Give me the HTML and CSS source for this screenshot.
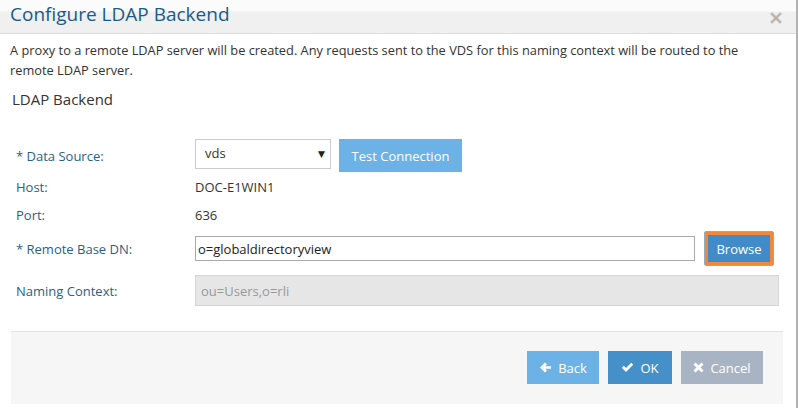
FILE: index.html
```html
<!DOCTYPE html>
<html>
<head>
<meta charset="utf-8">
<link rel="stylesheet" href="styles.css">
</head>
<body>
<div class="dialog">
  <div class="header">
    <div class="title">Configure LDAP Backend</div>
    <span class="close">
      <svg width="12" height="12" viewBox="0 0 12 12">
        <path d="M2 2 L10 10 M10 2 L2 10" stroke="#b8b8b8" stroke-width="2.6" stroke-linecap="square"/>
        <circle cx="6" cy="6.4" r="1.2" fill="#f3a060"/>
      </svg>
    </span>
  </div>
  <div class="body">
    <p class="desc">A proxy to a remote LDAP server will be created. Any requests sent to the VDS for this naming context will be routed to the remote LDAP server.</p>
    <h2 class="section">LDAP Backend</h2>
    <div class="form">
      <div class="row r-ds">
        <label class="lbl">* Data Source:</label>
        <div class="ctl">
          <div class="select"><span>vds</span><span class="caret">▼</span></div>
          <button class="btn btn-light test">Test Connection</button>
        </div>
      </div>
      <div class="row r-host">
        <label class="lbl">Host:</label>
        <div class="ctl val">DOC-E1WIN1</div>
      </div>
      <div class="row r-port">
        <label class="lbl">Port:</label>
        <div class="ctl val">636</div>
      </div>
      <div class="row r-dn">
        <label class="lbl">* Remote Base DN:</label>
        <div class="ctl">
          <div class="input">o=globaldirectoryview</div>
          <button class="browse"><span>Browse</span></button>
        </div>
      </div>
      <div class="row r-nc">
        <label class="lbl">Naming Context:</label>
        <div class="ctl">
          <div class="input disabled">ou=Users,o=rli</div>
        </div>
      </div>
    </div>
  </div>
  <div class="footer">
    <button class="btn btn-light fbtn back">
      <svg width="13" height="13" viewBox="0 0 13 13"><path d="M1 6.5 L6 1.5 L8 3.5 L6.2 5.3 L12 5.3 L12 7.7 L6.2 7.7 L8 9.5 L6 11.5 Z" fill="#fff"/></svg>
      Back
    </button>
    <button class="btn btn-primary fbtn ok">
      <svg width="13" height="13" viewBox="0 0 13 13"><path d="M0.8 6.8 L2.8 4.8 L5 7 L10.2 1.8 L12.2 3.8 L5 11 Z" fill="#fff"/></svg>
      OK
    </button>
    <button class="btn btn-gray fbtn cancel">
      <svg width="11" height="11" viewBox="0 0 11 11"><path d="M1.5 1.5 L9.5 9.5 M9.5 1.5 L1.5 9.5" stroke="#fff" stroke-width="3"/></svg>
      Cancel
    </button>
  </div>
</div>
</body>
</html>
```
FILE: styles.css
```css
* { box-sizing: border-box; }
html, body { margin: 0; padding: 0; background: #fff; }
body { font-family: "Open Sans", "DejaVu Sans", sans-serif; color: #333; }

.dialog {
  width: 798px;
  height: 408px;
  border-right: 2px solid #b2b2b2;
  position: relative;
}

.header {
  height: 34px;
  background: linear-gradient(#fbfbfb 0, #fbfbfb 11px, #f0f0f0 12px, #f0f0f0 100%);
  border-bottom: 1px solid #dcdcdc;
  display: flex;
  align-items: flex-start;
  justify-content: space-between;
  padding: 0 14px 0 10px;
}
.title {
  font-size: 19px;
  line-height: 28px;
  color: #1c5a8a;
}
.close { margin-top: 12px; display: block; line-height: 0; }

.body { padding: 0 10px; }
.desc {
  margin: 6px 0 0 0;
  max-width: 760px;
  font-size: 12.8px;
  line-height: 20px;
  color: #333;
}
.section {
  margin: 9px 0 0 2px;
  font-size: 15px;
  font-weight: normal;
  line-height: 20px;
  color: #333;
}

.form { margin-top: 30px; padding-left: 6px; }
.row { display: flex; align-items: center; }
.lbl { width: 179px; font-size: 13px; color: #2a5f88; flex: none; }
.ctl { display: flex; align-items: center; font-size: 13px; color: #333; }

.r-ds { height: 33px; }
.r-host { height: 30px; }
.r-port { height: 25px; }
.r-dn { height: 37px; margin-top: 3px; }
.r-nc { height: 31px; margin-top: 8px; }

.select {
  width: 136px;
  height: 30px;
  border: 1px solid #ccc;
  display: flex;
  align-items: center;
  justify-content: space-between;
  padding: 0 5px 2px 9px;
  font-size: 13px;
  align-self: flex-start;
}
.caret { font-size: 9px; color: #222; }

.btn {
  border: none;
  color: #fff;
  font-family: "Open Sans", "DejaVu Sans", sans-serif;
  font-size: 13px;
  padding: 0;
  display: inline-flex;
  align-items: center;
  justify-content: center;
  gap: 6px;
}
.btn-light { background: #6cb2e6; }
.btn-primary { background: #4590c9; }
.btn-gray { background: #a8b4c4; }

.test { width: 123px; height: 33px; margin-left: 8px; }

.input {
  width: 500px;
  height: 25px;
  border: 1px solid #aaa;
  padding: 0 2px;
  display: flex;
  align-items: center;
  font-size: 13px;
  color: #222;
}
.input.disabled {
  width: 584px;
  height: 31px;
  background: #e6e6e6;
  border-color: #d6d6d6;
  color: #999;
  padding-left: 5px;
}

.browse {
  margin-left: 9px;
  width: 70px;
  height: 35px;
  padding: 0;
  border: 1px solid #9aa9bb;
  border-radius: 2px;
  background: #f0873a;
  display: flex;
  align-items: stretch;
}
.browse span {
  flex: 1;
  margin: 3px;
  background: #428bca;
  color: #fff;
  font-family: "Open Sans", "DejaVu Sans", sans-serif;
  font-size: 13px;
  display: flex;
  align-items: center;
  justify-content: center;
}

.footer {
  position: absolute;
  left: 11px;
  top: 331px;
  width: 772px;
  height: 73px;
  background: #f6f6f6;
  border-top: 1px solid #e2e2e2;
  display: flex;
  justify-content: flex-end;
  align-items: flex-start;
  gap: 9px;
  padding: 19px 20px 0 0;
}
.fbtn { height: 33px; }
.back { width: 72px; }
.ok { width: 64px; }
.cancel { width: 82px; }
```
